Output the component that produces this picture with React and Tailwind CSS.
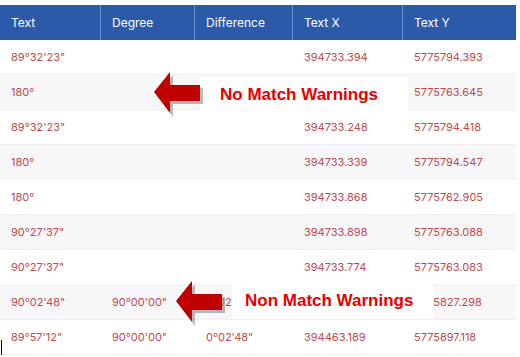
import React from 'react'

const rows = [
  ['89°32\'23"', '', '', '394733.394', '5775794.393'],
  ['180°', '', '', '', '5775763.645'],
  ['89°32\'23"', '', '', '394733.248', '5775794.418'],
  ['180°', '', '', '394733.339', '5775794.547'],
  ['180°', '', '', '394733.868', '5775762.905'],
  ['90°27\'37"', '', '', '394733.898', '5775763.088'],
  ['90°27\'37"', '', '', '394733.774', '5775763.083'],
  ['90°02\'48"', '90°00\'00"', '0°02\'48"', '', '5775827.298'],
  ['89°57\'12"', '90°00\'00"', '0°02\'48"', '394463.189', '5775897.118'],
]

const headers = ['Text', 'Degree', 'Difference', 'Text X', 'Text Y']

function Arrow() {
  return (
    <svg className="relative z-10 shrink-0" width="54" height="48" viewBox="0 0 54 48">
      <polygon
        points="5,24 21,4 21,17 51,17 51,33 21,33 21,46"
        fill="#8a8a8a"
        opacity="0.6"
      />
      <polygon points="2,21 18,1 18,14 48,14 48,30 18,30 18,42" fill="#c00000" />
    </svg>
  )
}

export default function App() {
  return (
    <div className="relative w-[520px] h-[357px] bg-white pt-[5px] font-['Inter','Noto_Sans',sans-serif] overflow-hidden">
      <div className="w-[516px]">
        <div className="grid grid-cols-[100px_94px_98px_110px_114px] h-[35px] bg-[#2b5ba8] text-white text-[12px]">
          {headers.map((h, i) => (
            <div
              key={h}
              className={`flex items-center px-[11px] ${i > 0 ? 'border-l border-[#6a8fca]' : ''}`}
            >
              {h}
            </div>
          ))}
        </div>
        {rows.map((r, i) => (
          <div
            key={i}
            className={`grid grid-cols-[100px_94px_98px_110px_114px] h-[35px] text-[11px] text-[#bd4b4d] border-b border-[#f0f0f3] ${i % 2 === 1 ? 'bg-[#f7f7f9]' : 'bg-white'}`}
          >
            {r.map((c, j) => (
              <div key={j} className={`flex items-center ${j === 0 ? 'pl-[11px]' : 'pl-[12px]'}`}>
                {c}
              </div>
            ))}
          </div>
        ))}
      </div>

      {/* text cursor artifact */}
      <div className="absolute left-[1px] top-[340px] w-[1px] h-[15px] bg-black" />

      {/* callouts */}
      <div className="absolute left-[152px] top-[71px] flex items-start">
        <Arrow />
        <div className="-ml-[6px] mt-[6px] w-[208px] h-[36px] bg-white flex items-center pl-[20px] font-['Liberation_Sans',Arial,sans-serif] font-bold text-[17px] text-[#e60000]">
          No Match Warnings
        </div>
      </div>

      <div className="absolute left-[174px] top-[280px] flex items-start">
        <Arrow />
        <div className="ml-[4px] mt-[3px] w-[201px] h-[36px] bg-white flex items-center pl-[13px] font-['Liberation_Sans',Arial,sans-serif] font-bold text-[17px] text-[#e60000]">
          Non Match Warnings
        </div>
      </div>
    </div>
  )
}
